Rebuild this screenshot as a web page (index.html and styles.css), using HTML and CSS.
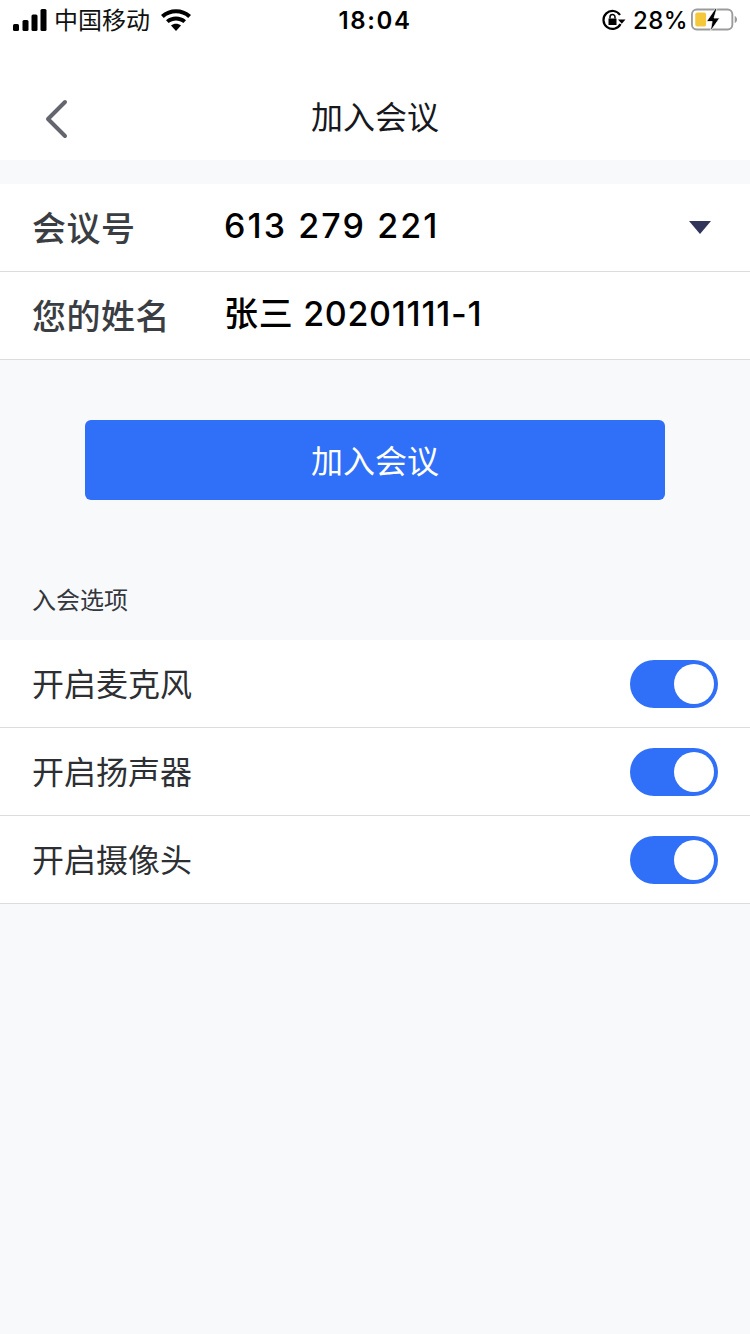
FILE: index.html
```html
<!DOCTYPE html>
<html lang="zh-CN">
<head>
    <meta charset="UTF-8">
    <meta name="viewport" content="width=device-width, initial-scale=1.0">
    <title>加入会议</title>
    <link rel="stylesheet" href="styles.css">
</head>
<body>
    <div class="status-bar">
        <div class="status-left">
            <svg class="signal" width="34" height="22" viewBox="0 0 34 22">
                <rect x="0" y="15" width="6" height="7" rx="1.5"/>
                <rect x="9.5" y="11" width="6" height="11" rx="1.5"/>
                <rect x="18.5" y="5.5" width="6" height="16.5" rx="1.5"/>
                <rect x="27.5" y="0" width="6" height="22" rx="1.5"/>
            </svg>
            <span class="carrier">中国移动</span>
            <svg class="wifi" width="30" height="22" viewBox="0 0 30 22">
                <path d="M15 22l-5-5.400c2.800-2.400 7.200-2.400 10 0z"/>
                <path d="M7.600 14.100L5 11.300c5.600-5 14.400-5 20 0l-2.600 2.800c-4.200-3.500-10.600-3.500-14.800 0z"/>
                <path d="M2.800 8.900L0 6c8.300-7.700 21.700-7.700 30 0l-2.800 2.900C20.500 2.800 9.500 2.800 2.800 8.900z"/>
            </svg>
        </div>
        <div class="status-time">18:04</div>
        <div class="status-right">
            <svg class="lock" width="24" height="22" viewBox="0 0 24 22">
                <path d="M18.500 15A9 9 0 1 1 18 6" fill="none" stroke="#000" stroke-width="2.200"/>
                <path d="M16 10.500h7.500l-3.700 4.200z"/>
                <path d="M6.500 9.500h8v6.500h-8z"/>
                <path d="M8 9.500V8a2.500 2.500 0 0 1 5 0v1.500" fill="none" stroke="#000" stroke-width="1.500"/>
            </svg>
            <span class="battery-text">28%</span>
            <svg class="battery" width="47" height="24" viewBox="0 0 50 24" preserveAspectRatio="none">
                <rect x="1" y="1.500" width="43" height="20" rx="5" fill="none" stroke="#9b9b9b" stroke-width="2"/>
                <path d="M46.500 8v7c1.500-.5 2.500-2 2.500-3.500S48 8.500 46.500 8z" fill="#9b9b9b"/>
                <path d="M6.500 4.500h7.500c1.500 0 2 1 2 2v10c0 1-.5 2-2 2H6.500c-1 0-2-1-2-2v-10c0-1 1-2 2-2z" fill="#f5c83c"/>
                <path d="M26 .5L16.500 13.500h6l-2 10L30.500 10h-6l3-9.500z" stroke="#fff" stroke-width="0.800"/>
            </svg>
        </div>
    </div>

    <div class="nav-bar">
        <svg class="back" width="24" height="40" viewBox="0 0 24 40">
            <path d="M21 3L4 20l17 17" fill="none" stroke="#63666e" stroke-width="4" stroke-linecap="round" stroke-linejoin="round"/>
        </svg>
        <div class="nav-title">加入会议</div>
    </div>

    <div class="form-card">
        <div class="form-row">
            <div class="form-label">会议号</div>
            <div class="form-value meeting-no">613 279 221</div>
            <div class="arrow-down"></div>
        </div>
        <div class="form-row">
            <div class="form-label">您的姓名</div>
            <div class="form-value name-value">张三 20201111-1</div>
        </div>
    </div>

    <div class="join-wrap">
        <div class="join-button">加入会议</div>
    </div>

    <div class="section-title">入会选项</div>

    <div class="options">
        <div class="option-row">
            <span class="option-label">开启麦克风</span>
            <div class="switch"><div class="knob"></div></div>
        </div>
        <div class="option-row">
            <span class="option-label">开启扬声器</span>
            <div class="switch"><div class="knob"></div></div>
        </div>
        <div class="option-row">
            <span class="option-label">开启摄像头</span>
            <div class="switch"><div class="knob"></div></div>
        </div>
    </div>
</body>
</html>
```

FILE: styles.css
```css
body {
    margin: 0;
    width: 750px;
    height: 1334px;
    overflow: hidden;
    background: #f8f9fb;
    color: #000;
    font-family: "Noto Sans CJK SC", "Liberation Sans", sans-serif;
}

.status-bar {
    display: flex;
    align-items: center;
    justify-content: space-between;
    height: 40px;
    background: #fff;
    font-size: 24px;
}

.status-left, .status-right {
    display: flex;
    align-items: center;
    width: 260px;
    box-sizing: border-box;
}

.status-left {
    padding-left: 13px;
}

.status-right {
    justify-content: flex-end;
    padding-right: 12px;
}

.carrier {
    margin-left: 7px;
    line-height: 36px;
    padding-bottom: 2px;
    color: #111;
}

.wifi {
    margin-left: 11px;
}

.status-time {
    font-family: "Inter", "Liberation Sans", sans-serif;
    font-weight: 600;
    font-size: 24px;
    letter-spacing: 1.6px;
}

.battery-text {
    font-family: "Inter", "Liberation Sans", sans-serif;
    font-size: 24px;
    font-weight: 500;
    letter-spacing: 0.4px;
    margin-left: 7px;
    margin-right: 3px;
}

.nav-bar {
    display: flex;
    align-items: center;
    justify-content: center;
    position: relative;
    height: 120px;
    background: #fff;
}

.back {
    position: absolute;
    left: 44px;
    top: 59px;
}

.nav-title {
    font-size: 32px;
    color: #16181d;
    position: relative;
    top: 15px;
}

.form-card {
    margin-top: 24px;
    background: #fff;
}

.form-row {
    display: flex;
    align-items: center;
    height: 87px;
    border-bottom: 1px solid #dcdcdc;
    padding-left: 32px;
    padding-right: 39px;
}

.form-label {
    width: 192px;
    flex-shrink: 0;
    font-size: 34px;
    font-weight: 500;
    letter-spacing: 0.5px;
    line-height: 50px;
    padding-bottom: 2px;
    color: #3a3d42;
}

.form-value {
    flex: 1;
    font-family: "Inter", "Noto Sans CJK SC", sans-serif;
    font-size: 34px;
    font-weight: 500;
    line-height: 50px;
    padding-bottom: 3px;
    color: #000;
}

.meeting-no {
    letter-spacing: 2.1px;
}

.name-value {
    letter-spacing: 0.7px;
}

.arrow-down {
    width: 0;
    height: 0;
    border-left: 11px solid transparent;
    border-right: 11px solid transparent;
    border-top: 13px solid #32355a;
}

.join-wrap {
    display: flex;
    justify-content: center;
    padding-top: 60px;
}

.join-button {
    display: flex;
    align-items: center;
    justify-content: center;
    width: 580px;
    height: 80px;
    padding-bottom: 3px;
    box-sizing: border-box;
    background: #306ff7;
    border-radius: 6px;
    color: #fff;
    font-size: 32px;
}

.section-title {
    height: 140px;
    box-sizing: border-box;
    padding: 81px 0 0 32px;
    font-size: 24px;
    line-height: 36px;
    color: #33363b;
}

.options {
    background: #fff;
}

.option-row {
    display: flex;
    align-items: center;
    justify-content: space-between;
    height: 87px;
    border-bottom: 1px solid #dcdcdc;
    padding: 0 32px;
    font-size: 32px;
    color: #2d2f33;
}

.option-label {
    line-height: 46px;
    padding-bottom: 4px;
}

.switch {
    display: flex;
    justify-content: flex-end;
    align-items: center;
    width: 88px;
    height: 48px;
    padding-right: 4px;
    box-sizing: border-box;
    background: #306ff7;
    border-radius: 24px;
}

.knob {
    width: 40px;
    height: 40px;
    border-radius: 50%;
    background: #fff;
}
```
